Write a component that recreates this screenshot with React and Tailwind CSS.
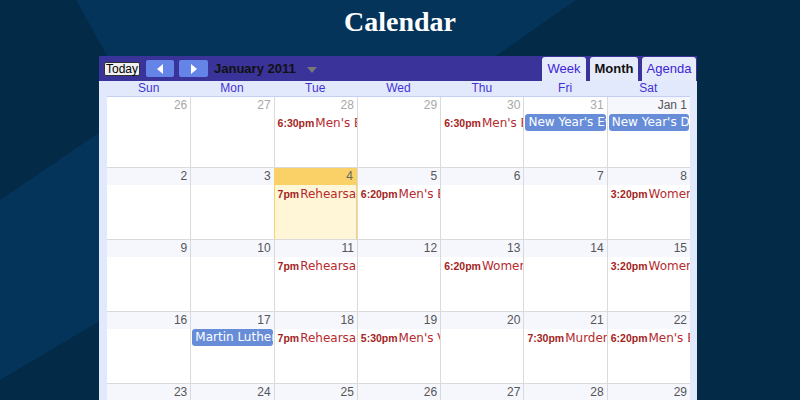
import React from "react";

const DAYS = ["Sun", "Mon", "Tue", "Wed", "Thu", "Fri", "Sat"];

// weeks of January 2011, each day: [label, inMonth, events, today]
const WEEKS = [
  [
    ["26", false, []],
    ["27", false, []],
    ["28", false, [{ time: "6:30pm", title: "Men's Basketball" }]],
    ["29", false, []],
    ["30", false, [{ time: "6:30pm", title: "Men's Basketball" }]],
    ["31", false, [{ allDay: true, title: "New Year's Eve" }]],
    ["Jan 1", true, [{ allDay: true, title: "New Year's Day" }]],
  ],
  [
    ["2", true, []],
    ["3", true, []],
    ["4", true, [{ time: "7pm", title: "Rehearsal" }], true],
    ["5", true, [{ time: "6:20pm", title: "Men's Basketball" }]],
    ["6", true, []],
    ["7", true, []],
    ["8", true, [{ time: "3:20pm", title: "Women's Basketball" }]],
  ],
  [
    ["9", true, []],
    ["10", true, []],
    ["11", true, [{ time: "7pm", title: "Rehearsal" }]],
    ["12", true, []],
    ["13", true, [{ time: "6:20pm", title: "Women's Basketball" }]],
    ["14", true, []],
    ["15", true, [{ time: "3:20pm", title: "Women's Basketball" }]],
  ],
  [
    ["16", true, []],
    ["17", true, [{ allDay: true, title: "Martin Luther King Day" }]],
    ["18", true, [{ time: "7pm", title: "Rehearsal" }]],
    ["19", true, [{ time: "5:30pm", title: "Men's Volleyball" }]],
    ["20", true, []],
    ["21", true, [{ time: "7:30pm", title: "Murder Mystery" }]],
    ["22", true, [{ time: "6:20pm", title: "Men's Basketball" }]],
  ],
  [
    ["23", true, []],
    ["24", true, []],
    ["25", true, [{ time: "7pm", title: "Rehearsal" }]],
    ["26", true, []],
    ["27", true, [{ time: "6:20pm", title: "Men's Basketball" }]],
    ["28", true, []],
    ["29", true, [{ time: "3:20pm", title: "Women's Basketball" }]],
  ],
  [
    ["30", true, []],
    ["31", true, []],
    ["Feb 1", false, []],
    ["2", false, []],
    ["3", false, []],
    ["4", false, []],
    ["5", false, []],
  ],
];

function Event({ ev }) {
  if (ev.allDay) {
    return (
      <div className="mx-[1px] rounded-[3px] bg-[#678dd9] px-[3px] text-[12px] leading-[17px] text-white whitespace-nowrap overflow-hidden font-['DejaVu_Sans',sans-serif]">
        {ev.title}
      </div>
    );
  }
  return (
    <div className="pl-[3px] leading-[16px] whitespace-nowrap overflow-hidden">
      <span className="text-[10.5px] font-bold text-[#a31f24] font-['Liberation_Sans',Arial,sans-serif]">
        {ev.time}
      </span>
      <span className="ml-[1px] text-[12px] text-[#b52a2e] font-['DejaVu_Sans',sans-serif]">
        {ev.title}
      </span>
    </div>
  );
}

function DayCell({ day }) {
  const [label, inMonth, events, today] = day;
  return (
    <div
      className={`overflow-hidden border-l border-[#dadada] first:border-l-0 ${
        today ? "bg-[#fff6d8] border-x border-x-[#f9d166] first:border-l" : "bg-white"
      }`}
    >
      <div
        className={`h-[17px] pr-[3px] text-right text-[12px] leading-[17px] ${
          today
            ? "bg-[#f9d166] text-[#666]"
            : inMonth
            ? "bg-[#f5f7fd] text-[#555]"
            : "bg-white text-[#a8a8a8]"
        }`}
      >
        {label}
      </div>
      <div className="flex flex-col gap-[1px]">
        {events.map((ev, i) => (
          <Event key={i} ev={ev} />
        ))}
      </div>
    </div>
  );
}

export default function App() {
  return (
    <div className="relative h-[400px] w-[800px] overflow-hidden bg-[#032a47] font-['Liberation_Sans',Arial,sans-serif]">
      {/* background shapes */}
      <svg className="absolute inset-0" width="800" height="400">
        <polygon points="76,0 576,0 447,90 126,90" fill="#04345a" />
        <polygon points="0,200 100,132 100,321 0,380" fill="#04345a" />
      </svg>

      <div className="relative">
        <h1 className="pt-[8px] text-center text-[28px] font-bold leading-[28px] text-white font-['Liberation_Serif',serif]">
          Calendar
        </h1>

        <div className="ml-[99px] mt-[20px] w-[598px]">
          {/* toolbar */}
          <div className="flex h-[25px] items-end bg-[#3a3399] pr-[1px]">
            <div className="flex h-full items-center">
              <button className="ml-[5px] h-[14px] rounded-[2px] border border-[#333] bg-[#f0f0f0] px-[1px] text-[12px] leading-[12px] text-black">
                Today
              </button>
              <button className="ml-[6px] flex h-[17px] w-[28px] items-center justify-center rounded-[2px] bg-[#6584e8]">
                <span className="h-0 w-0 border-y-[5px] border-r-[6px] border-y-transparent border-r-white" />
              </button>
              <button className="ml-[5px] flex h-[17px] w-[29px] items-center justify-center rounded-[2px] bg-[#6584e8]">
                <span className="h-0 w-0 border-y-[5px] border-l-[6px] border-y-transparent border-l-white" />
              </button>
              <span className="ml-[6px] text-[13px] font-bold text-[#111]">January 2011</span>
              <span className="ml-[11px] mt-[2px] h-0 w-0 border-x-[5px] border-t-[6px] border-x-transparent border-t-[#777]" />
            </div>
            <div className="ml-auto flex h-[24px] gap-[4px]">
              <div className="flex w-[44px] items-center justify-center rounded-t-[3px] bg-[#e6ebfc] text-[13px] text-[#3c23d6]">
                Week
              </div>
              <div className="flex w-[48px] items-center justify-center rounded-t-[3px] bg-[#e6ebfc] text-[13px] font-bold text-[#111]">
                Month
              </div>
              <div className="flex w-[54px] items-center justify-center rounded-t-[3px] bg-[#e6ebfc] text-[13px] text-[#3c23d6]">
                Agenda
              </div>
            </div>
          </div>

          {/* body */}
          <div className="bg-[#e3e9fc] pl-[8px] pr-[7px]">
            <div className="grid h-[15px] grid-cols-7 text-center text-[12px] leading-[15px] text-[#4232d4]">
              {DAYS.map((d) => (
                <div key={d}>{d}</div>
              ))}
            </div>
            <div className="border-t border-[#c3cff5]">
              {WEEKS.map((week, wi) => (
                <div
                  key={wi}
                  className={`grid grid-cols-7 ${wi ? "h-[72px] border-t border-[#dadada]" : "h-[70px]"}`}
                >
                  {week.map((day, di) => (
                    <DayCell key={di} day={day} />
                  ))}
                </div>
              ))}
            </div>
          </div>
        </div>
      </div>
    </div>
  );
}
